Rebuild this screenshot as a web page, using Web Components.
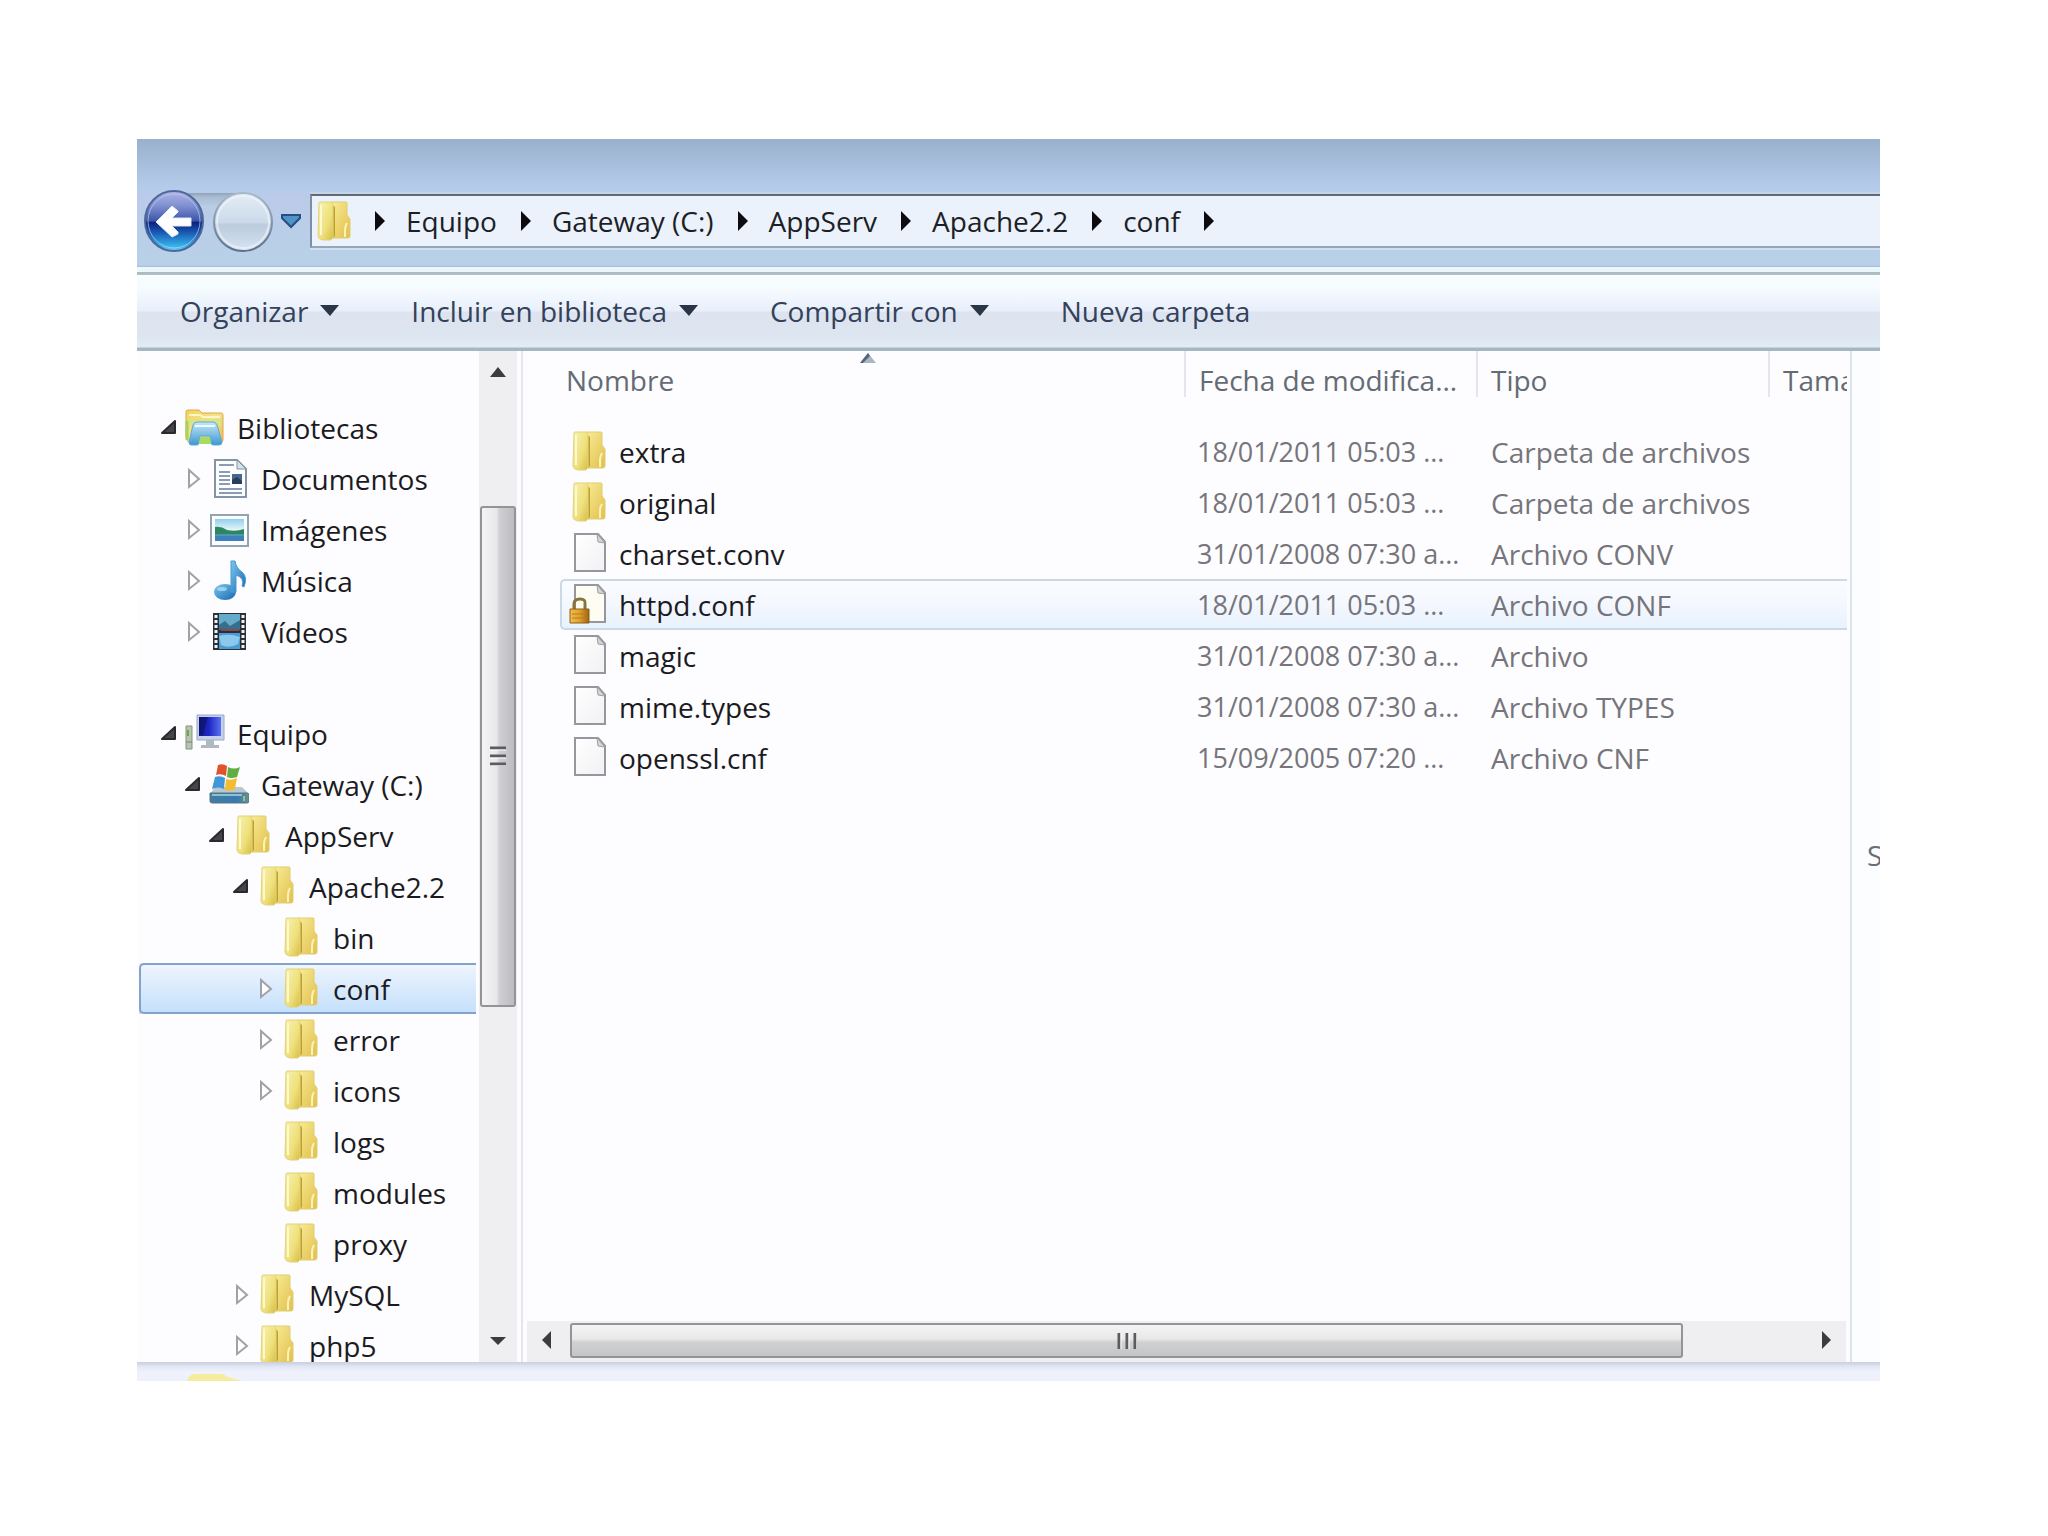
<!DOCTYPE html>
<html lang="es">
<head>
<meta charset="utf-8">
<title>conf</title>
<style>
  body { margin: 0; background: #fff; font-family: "Open Sans", "Noto Sans", sans-serif; font-size: 28px; color: #1b1b1f; }
  explorer-window { box-sizing: border-box; height: 100vh; padding: 139px 168px 155px 137px; }
</style>
</head>
<body>
<explorer-window>
  <nav-bar slot="nav">
    <path-crumb>Equipo</path-crumb>
    <path-crumb>Gateway (C:)</path-crumb>
    <path-crumb>AppServ</path-crumb>
    <path-crumb>Apache2.2</path-crumb>
    <path-crumb>conf</path-crumb>
  </nav-bar>
  <command-bar slot="commands">
    <command-button menu>Organizar</command-button>
    <command-button menu>Incluir en biblioteca</command-button>
    <command-button menu>Compartir con</command-button>
    <command-button>Nueva carpeta</command-button>
  </command-bar>
  <folder-tree slot="tree">
    <tree-item level="0" icon="library" state="open">Bibliotecas</tree-item>
    <tree-item level="1" icon="document" state="closed">Documentos</tree-item>
    <tree-item level="1" icon="picture" state="closed">Imágenes</tree-item>
    <tree-item level="1" icon="music" state="closed">Música</tree-item>
    <tree-item level="1" icon="video" state="closed" last>Vídeos</tree-item>
    <tree-item level="0" icon="computer" state="open">Equipo</tree-item>
    <tree-item level="1" icon="drive" state="open">Gateway (C:)</tree-item>
    <tree-item level="2" icon="folder" state="open">AppServ</tree-item>
    <tree-item level="3" icon="folder" state="open">Apache2.2</tree-item>
    <tree-item level="4" icon="folder">bin</tree-item>
    <tree-item level="4" icon="folder" state="closed" selected>conf</tree-item>
    <tree-item level="4" icon="folder" state="closed">error</tree-item>
    <tree-item level="4" icon="folder" state="closed">icons</tree-item>
    <tree-item level="4" icon="folder">logs</tree-item>
    <tree-item level="4" icon="folder">modules</tree-item>
    <tree-item level="4" icon="folder">proxy</tree-item>
    <tree-item level="3" icon="folder" state="closed">MySQL</tree-item>
    <tree-item level="3" icon="folder" state="closed">php5</tree-item>
  </folder-tree>
  <file-list slot="files"></file-list>
  <preview-pane slot="preview">S</preview-pane>
  <details-strip slot="details"></details-strip>
</explorer-window>

<script>
const ICONS = {
  folder: `<defs>
      <linearGradient id="a" x1="0" x2="1" y1="0" y2="1"><stop offset="0" stop-color="#f8f2ae"/><stop offset=".6" stop-color="#efe07c"/><stop offset="1" stop-color="#d6bd45"/></linearGradient>
      <linearGradient id="b" x1="0" x2="1" y1="0" y2="1"><stop offset="0" stop-color="#f8ec98"/><stop offset="1" stop-color="#e2bf4a"/></linearGradient>
      <linearGradient id="c" x1="0" x2="1"><stop offset="0" stop-color="#d3bb43"/><stop offset="1" stop-color="#b99c2e"/></linearGradient></defs>
    <path d="M17 1H32Q33 1 33 2V14L36 18V35Q36 37 34 37H19Z" fill="url(#b)" stroke="#e0cd70" stroke-width="1"/>
    <path d="M33 22Q31 25 31 29V36" fill="none" stroke="#fbf3bd" stroke-width="2"/>
    <path d="M17 3 21 6V35L17 39Z" fill="url(#c)"/>
    <path d="M5 2Q5 1 6 1H17Q19 2 19 5V36L17 39H9Q4 38 4 35Z" fill="url(#a)" stroke="#e2d277" stroke-width="1"/>
    <path d="M7 4V34" stroke="#fdf9cf" stroke-width="2"/>`,
  library: `<defs>
      <linearGradient id="a" x1="0" x2="1" y1="0" y2="1"><stop offset="0" stop-color="#f2d35f"/><stop offset=".5" stop-color="#f4e28a"/><stop offset="1" stop-color="#f0b850"/></linearGradient>
      <linearGradient id="b" x1="0" x2="0" y1="0" y2="1"><stop offset="0" stop-color="#c7e9f5"/><stop offset="1" stop-color="#3d97d3"/></linearGradient></defs>
    <path d="M1 5Q1 3 3 3H14L17 6H36Q38 6 38 8V33Q38 35 36 35H4Q2 35 1 30Z" fill="url(#a)" stroke="#dfa847"/>
    <path d="M4 8H15L18 10H35" stroke="#fff6c4" stroke-width="2" fill="none"/>
    <path d="M2 12H37V19H2Z" fill="#d4e58a" opacity=".8"/><path d="M2 14V33" stroke="#a5d35f" stroke-width="3"/>
    <path d="M8 18Q9 15 12 15H28Q31 15 32 18L37 35Q37 38 34 38H28Q26 38 26 35L25 29H15L14 35Q14 38 12 38H6Q4 38 4 35Z" fill="url(#b)" stroke="#5aa9d8"/>
    <path d="M10 19H30" stroke="#eefaff" stroke-width="2"/><path d="M15 30H25L26 37H14Z" fill="#a6dc63"/>`,
  document: `<path d="M6 2H28L37 11V39H6Z" fill="#fbfdff" stroke="#8494a4" stroke-width="2"/>
    <path d="M28 2V11H37Z" fill="#d3e2ec" stroke="#8494a4"/>
    <path d="M10 7H25M10 14H21M10 18H21M10 22H21M10 26H21M10 31H33M10 35H33" stroke="#8b9cb3" stroke-width="2"/>
    <path d="M23 16H33V26H23Z" fill="#48678e"/><path d="M23 22 28 19 33 23V26H23Z" fill="#273e5c"/>`,
  picture: `<defs><linearGradient id="a" x1="0" x2="0" y1="0" y2="1"><stop offset="0" stop-color="#8fd0ee"/><stop offset=".5" stop-color="#e7f6f8"/><stop offset="1" stop-color="#5fa8cf"/></linearGradient></defs>
    <path d="M2 6H39V37H2Z" fill="#fbfdfe" stroke="#93a3b0" stroke-width="2"/>
    <path d="M6 10H35V32H6Z" fill="url(#a)"/><path d="M6 18Q12 17 18 21 27 23 35 20V26H6Z" fill="#2d8661"/>
    <path d="M6 26Q20 24 35 26V32H6Z" fill="#3f7fbd"/><path d="M6 26H35" stroke="#60b3a0"/>`,
  music: `<defs><linearGradient id="a" x1="0" x2="1" y1="0" y2="1"><stop offset="0" stop-color="#7cc7ef"/><stop offset="1" stop-color="#1668b0"/></linearGradient></defs>
    <ellipse cx="16" cy="32" rx="11" ry="8" fill="url(#a)"/>
    <path d="M22 1H26Q27 8 33 12 39 17 35 27L33 26Q36 18 27 15V32H22Z" fill="url(#a)" stroke="#4b9bd2"/>
    <ellipse cx="13" cy="29" rx="5" ry="2" fill="#a9ddf5" opacity=".8"/>`,
  video: `<path d="M4 2H37V39H4Z" fill="#2a3038"/><path d="M10 3H31V19H10Z" fill="#66abc9"/><path d="M10 22H31V38H10Z" fill="#4b9cd0"/>
    <path d="M10 14 16 10 21 15 31 9V19H10Z" fill="#356f8e"/><path d="M10 25Q20 22 31 26L29 33Q20 38 12 34Z" fill="#8bc8ec"/>
    <path d="M12 19H30" stroke="#8e4448" stroke-width="2"/>
    <path d="M7 4V38M34 4V38" stroke="#f1f4f6" stroke-width="3" stroke-dasharray="3 2"/>`,
  computer: `<defs><linearGradient id="a" x1="0" x2="1"><stop offset="0" stop-color="#141a8c"/><stop offset=".45" stop-color="#1d28c4"/><stop offset="1" stop-color="#5a70ee"/></linearGradient></defs>
    <path d="M12 2H39V27H12Z" fill="#c5d0ea" stroke="#9aa9ca"/><path d="M14 4H36V23H14Z" fill="url(#a)"/>
    <path d="M15 4H23L18 22H14V4Z" fill="#0c1063" opacity=".6"/>
    <path d="M21 27H29V32H34V35H16V32H21Z" fill="#aebac0"/>
    <path d="M1 13H7V36H1Z" fill="#b8c3b4" stroke="#86937f"/><path d="M3 17V23" stroke="#6aa84a" stroke-width="2"/><path d="M1 29H7" stroke="#798577"/>`,
  drive: `<defs><linearGradient id="a" x1="0" x2="1"><stop offset="0" stop-color="#3f7f9f"/><stop offset=".7" stop-color="#3a78b0"/><stop offset="1" stop-color="#6e8f8e"/></linearGradient></defs>
    <path d="M6 23H33L40 30H1Z" fill="#b9c7ce"/><path d="M1 29H38Q40 29 40 31V37Q40 39 38 39H3Q1 39 1 37Z" fill="url(#a)" stroke="#577483"/>
    <path d="M3 31H33" stroke="#8cc0d8" stroke-width="2"/><path d="M35 32V37" stroke="#7fd07a" stroke-width="2"/>
    <path d="M9 1Q14 -1 18 2L17 12Q12 9 7 11Z" fill="#e0532c"/><path d="M19 3Q25 6 31 3L28 13Q22 15 18 13Z" fill="#5fae42"/>
    <path d="M6 13Q11 11 16 14L15 25Q9 22 3 25Z" fill="#3f96d8"/><path d="M17 15Q22 17 28 14L26 25Q20 28 16 26Z" fill="#f3bd31"/>`,
  file: `<defs><linearGradient id="a" x1="0" x2="1" y1="0" y2="1"><stop offset="0" stop-color="#fff"/><stop offset="1" stop-color="#f1f1f4"/></linearGradient></defs>
    <path d="M6 1H29L36 9V38H6Z" fill="url(#a)" stroke="#96969c" stroke-width="2"/><path d="M28 1 29 9 36 10Z" fill="#d5d5da" stroke="#9f9fa5"/>`,
  locked: `<defs><linearGradient id="a" x1="0" x2="1"><stop offset="0" stop-color="#f0c04c"/><stop offset=".5" stop-color="#e2a12c"/><stop offset="1" stop-color="#9c6412"/></linearGradient></defs>
    <path d="M6 1H29L36 9V38H6Z" fill="#fdfdf4" stroke="#96969c" stroke-width="2"/><path d="M28 1 29 9 36 10Z" fill="#d5d5da" stroke="#9f9fa5"/>
    <path d="M5 26V20Q5 15 11 15T16 20V26" fill="none" stroke="#8a7434" stroke-width="3"/>
    <path d="M1 25H20V39H1Z" fill="url(#a)" stroke="#8e5f18"/><path d="M3 30H18M3 34H18" stroke="#b57a1d"/>`
};

function define(name, html, setup) {
  customElements.define(name, class extends HTMLElement {
    constructor() {
      super();
      this.attachShadow({ mode: 'open' }).innerHTML = html;
    }
    connectedCallback() { if (setup) setup(this, this.shadowRoot); }
  });
}

define('shell-icon', `<style>:host{display:block;width:40px;height:41px;flex:none}svg{display:block}</style>
  <svg width="40" height="41" viewBox="0 0 40 41" aria-hidden="true"></svg>`,
  (el, root) => { root.querySelector('svg').innerHTML = ICONS[el.getAttribute('name')] || ''; });

define('explorer-window', `<style>
    :host{display:flex;flex-direction:column}
    .body{flex:1;min-height:0;display:flex;background:#fdfcfe}
    ::slotted([slot=files]){flex:1;min-width:0}
  </style>
  <slot name="nav"></slot><slot name="commands"></slot>
  <div class="body"><slot name="tree"></slot><slot name="files"></slot><slot name="preview"></slot></div>
  <slot name="details"></slot>`);

define('nav-bar', `<style>
    :host{display:flex;align-items:flex-start;box-sizing:border-box;height:128px;padding:51px 0 0 7px;overflow:hidden;
      background:linear-gradient(#9ab1cc,#a6bedb 24px,#b5cbea 48px,#bbcbe9 60px,#b9cfe8 100px,#b9d0e9 126px,#a9bad2)}
    .row{flex:1;min-width:0;display:flex;align-items:center;height:62px}
    button{border:0;padding:0;background:none;display:block;flex:none}
    svg{display:block}
    .pair{display:flex;gap:9px;align-items:center;background:linear-gradient(#8fa3ba,#a9bcd2 4px,#b9cde6 14px,transparent 30px) no-repeat 30px 3px/68px 34px}
    .recent{margin:0 8px 0 7px}
    .address{flex:1;min-width:0;box-sizing:border-box;height:54px;display:flex;align-items:center;padding-left:2px;
      background:#ecf2fb;border:2px solid #7d8ea3;border-top-color:#5d6b7c;border-bottom-color:#93a6bd;border-right:0;
      box-shadow:0 -2px #c9d4e2,0 2px #cfe0f1;overflow:hidden}
    .arrow{padding-left:21px}
  </style>
  <div class="row">
    <div class="pair">
    <button aria-label="Atrás"><svg width="60" height="62" viewBox="0 0 60 62">
      <defs><linearGradient id="g" x1="0" x2="0" y1="0" y2="1"><stop offset="0" stop-color="#b3b7e6"/><stop offset=".25" stop-color="#7f8fd0"/><stop offset=".5" stop-color="#3d55a8"/><stop offset=".52" stop-color="#0d1f7a"/><stop offset=".7" stop-color="#1a5db5"/><stop offset=".92" stop-color="#35b4ea"/><stop offset="1" stop-color="#6cd7f5"/></linearGradient></defs>
      <ellipse cx="30" cy="31" rx="29" ry="30" fill="url(#g)" stroke="#4d679b" stroke-width="2"/>
      <ellipse cx="30" cy="31" rx="26" ry="27" fill="none" stroke="#b7cdf0" stroke-width="1" opacity=".7"/>
      <path d="M12 32 28 16 34 21V22L28 28H47V36H28L34 42V44L28 47Z" fill="#fff" stroke="#dfe8f8" stroke-width="1"/></svg></button>
    <button aria-label="Adelante"><svg width="60" height="62" viewBox="0 0 60 62">
      <defs><linearGradient id="h" x1="0" x2="0" y1="0" y2="1"><stop offset="0" stop-color="#e4edf6"/><stop offset=".5" stop-color="#ccdae9"/><stop offset=".55" stop-color="#bccbdd"/><stop offset="1" stop-color="#d5e3f2"/></linearGradient>
      <linearGradient id="i" x1="0" x2="0" y1="0" y2="1"><stop offset="0" stop-color="#a9b9cc"/><stop offset="1" stop-color="#5f7086"/></linearGradient></defs>
      <ellipse cx="30" cy="32" rx="29" ry="29" fill="url(#h)" stroke="url(#i)" stroke-width="2"/>
      <ellipse cx="30" cy="32" rx="26" ry="26" fill="none" stroke="#eef4fb" stroke-width="2" opacity=".7"/></svg></button>
    </div>
    <button class="recent" aria-label="Páginas recientes"><svg width="22" height="18" viewBox="0 0 22 18"><path d="M2 3H20V6L11 15 2 6Z" fill="#4f93c9" stroke="#274f83" stroke-width="2"/></svg></button>
    <nav class="address"><shell-icon name="folder"></shell-icon>
      <svg class="arrow" width="10" height="20" viewBox="0 0 10 20"><path d="M0 0 10 10 0 20Z" fill="#0b0b10"/></svg><slot></slot></nav>
  </div>`);

define('path-crumb', `<style>
    :host{display:flex;align-items:center;flex:none}
    a{color:#1d1f27;text-decoration:none;padding:0 24px 0 21px;white-space:nowrap}
    svg{display:block}
  </style><a href="#"><slot></slot></a><svg width="10" height="20" viewBox="0 0 10 20"><path d="M0 0 10 10 0 20Z" fill="#0b0b10"/></svg>`);

define('command-bar', `<style>
    :host{display:flex;align-items:center;gap:72px;box-sizing:border-box;height:84px;padding:3px 0 0 43px;color:#33425a;overflow:hidden;
      background:linear-gradient(#eaf8fb 5px,#a9b9bf 5px,#b3c2c9 8px,#f8feff 8px,#f4fafe 24px,#e8effb 44px,#dde4f0 45px,#dde5f1 70px,#e0edf5 80px,#a7b7c1 81px)}
  </style><slot></slot>`);

define('command-button', `<style>
    :host{display:block;flex:none}
    button{display:flex;align-items:center;gap:12px;border:0;padding:0;background:none;font:inherit;color:inherit;white-space:nowrap}
    svg{display:none}
    :host([menu]) svg{display:block}
  </style><button><slot></slot><svg width="19" height="11" viewBox="0 0 19 11"><path d="M0 0H19L10 11Z" fill="#2a3648"/></svg></button>`);

define('folder-tree', `<style>
    :host{display:flex;flex:none;width:386px;box-sizing:border-box;border-right:2px solid #e4e6ee}
    .items{flex:1;min-width:0;overflow:hidden;padding-top:51px;box-sizing:border-box}
    scroll-bar{width:38px;margin:0 4px 0 3px}
  </style><div class="items" role="tree"><slot></slot></div>
  <scroll-bar direction="vertical" style="--before:154fr;--thumb:499fr;--after:354fr"></scroll-bar>`);

define('tree-item', `<style>
    :host{display:flex;align-items:center;box-sizing:border-box;height:51px;padding-left:calc(23px + 24px*var(--level,0));white-space:nowrap}
    :host([last]){margin-bottom:51px}
    :host([selected]){background:linear-gradient(#f0f6fe,#d9eafc 50%,#c3e0fd) no-repeat 2px 0/100% 100%;position:relative}
    :host([selected])::before{content:"";position:absolute;inset:0 0 0 2px;border:2px solid #84a3cc;border-right:0;border-radius:5px 0 0 5px}
    button{border:0;padding:0;background:none;width:18px;margin-right:7px;height:24px;flex:none}
    svg{display:none}
    :host([state=open]) .open,:host([state=closed]) .closed{display:block}
    .label{margin-left:12px}
  </style>
  <button aria-label="Expandir o contraer"><svg class="open" width="18" height="24" viewBox="0 0 18 24"><path d="M2 17H15V5Z" fill="#45454c" stroke="#2a2a2e" stroke-width="2" stroke-linejoin="round"/></svg>
  <svg class="closed" width="18" height="24" viewBox="0 0 18 24"><path d="M5 3V20L15 12Z" fill="#fff" stroke="#a1a1a8" stroke-width="2"/></svg></button>
  <shell-icon></shell-icon><span class="label"><slot></slot></span>`,
  (el, root) => {
    el.setAttribute('role', 'treeitem');
    el.style.setProperty('--level', el.getAttribute('level'));
    const icon = document.createElement('shell-icon');
    icon.setAttribute('name', el.getAttribute('icon'));
    root.querySelector('shell-icon').replaceWith(icon);
    if (!el.hasAttribute('state')) root.querySelector('button').style.visibility = 'hidden';
  });

define('scroll-bar', `<style>
    :host{display:grid;box-sizing:border-box;background:#efeef0}
    :host([direction=vertical]){grid-template-rows:var(--before) var(--thumb) var(--after)}
    :host([direction=horizontal]){grid-template-columns:var(--before) var(--thumb) var(--after)}
    .end{display:flex}
    .last{justify-content:flex-end;align-items:flex-end}
    button{border:0;padding:0;background:none;display:grid;place-items:center;width:38px;height:42px}
    :host([direction=horizontal]) button{height:38px}
    :host([direction=horizontal]) .last{align-items:flex-start}
    .thumb{box-sizing:border-box;display:grid;place-items:center;border:2px solid #949498;border-radius:3px;margin:0 1px}
    :host([direction=vertical]) .thumb{background:linear-gradient(90deg,#f4f4f6,#e8e8ea 45%,#cfcfd2 55%,#bdbdc1)}
    :host([direction=horizontal]) .thumb{background:linear-gradient(#f5f4f5,#e9e8e9 45%,#d0d1d2 55%,#c3c5c6);margin:2px 0 4px}
    svg{display:block}
    :host([direction=vertical]) .h,:host([direction=horizontal]) .v{display:none}
  </style>
  <div class="end"><button aria-label="Retroceder"><svg class="v" width="16" height="10" viewBox="0 0 16 10"><path d="M0 10 8 0 16 10Z" fill="#3c3c40"/></svg><svg class="h" width="9" height="18" viewBox="0 0 9 18"><path d="M9 0V18L0 9Z" fill="#3c3c40"/></svg></button></div>
  <div class="thumb"><svg class="v" width="16" height="20" viewBox="0 0 16 20"><path d="M0 2H16M0 10H16M0 18H16" stroke="#5c5c60" stroke-width="3"/><path d="M0 4H16M0 12H16M0 20H16" stroke="#fff"/></svg>
  <svg class="h" width="20" height="16" viewBox="0 0 20 16"><path d="M2 0V16M10 0V16M18 0V16" stroke="#5c5c60" stroke-width="3"/><path d="M4 0V16M12 0V16M20 0V16" stroke="#fff"/></svg></div>
  <div class="end last"><button aria-label="Avanzar"><svg class="v" width="16" height="8" viewBox="0 0 16 8"><path d="M0 0H16L8 8Z" fill="#3c3c40"/></svg><svg class="h" width="9" height="18" viewBox="0 0 9 18"><path d="M0 0 9 9 0 18Z" fill="#3c3c40"/></svg></button></div>`);

const FILES = [
  ['folder', 'extra', '18/01/2011 05:03 ...', 'Carpeta de archivos'],
  ['folder', 'original', '18/01/2011 05:03 ...', 'Carpeta de archivos'],
  ['file', 'charset.conv', '31/01/2008 07:30 a...', 'Archivo CONV'],
  ['locked', 'httpd.conf', '18/01/2011 05:03 ...', 'Archivo CONF'],
  ['file', 'magic', '31/01/2008 07:30 a...', 'Archivo'],
  ['file', 'mime.types', '31/01/2008 07:30 a...', 'Archivo TYPES'],
  ['file', 'openssl.cnf', '15/09/2005 07:20 ...', 'Archivo CNF']
];

define('file-list', `<style>
    :host{display:flex;flex-direction:column;overflow:hidden}
    .table{flex:1;min-height:0;overflow:hidden;padding-left:37px;margin-right:3px}
    table{width:100%;table-layout:fixed;border-spacing:0}
    .date,.type{width:292px}.size{width:79px}
    th,td{box-sizing:border-box;padding:0 0 0 15px;text-align:left;white-space:nowrap;font-weight:400;overflow:hidden}
    th{height:60px;padding-bottom:2px;color:#646b75;position:relative;
      background:linear-gradient(#e3e6ee,#e3e6ee) no-repeat 0 0/2px 46px}
    th:first-child{padding-left:6px;background:none}
    th svg{position:absolute;top:2px;left:48%}
    td{height:51px;color:#75757b}
    td:nth-child(2){font-size:27px;padding-left:13px}
    td:first-child{padding-left:9px;color:#1b1b1f}
    tbody::before{content:"";display:block;height:15px}
    .name{display:flex;align-items:center;gap:10px}
    .hot td{background:linear-gradient(#fafcff,#f4f7fe 50%,#e8f2fd);border:solid #cbd9e6;border-width:2px 0}
    .hot td:first-child{border-left-width:2px;border-radius:5px 0 0 5px;padding-left:7px}
    scroll-bar{height:41px;margin:0 4px 0 4px}
  </style>
  <div class="table"><table>
    <thead><tr><th>Nombre<svg width="16" height="10" viewBox="0 0 16 10"><path d="M0 10 8 0 16 10Z" fill="#a9b6c4"/><path d="M0 10 8 0 10 3 3 10Z" fill="#56667a"/></svg></th>
    <th class="date">Fecha de modifica...</th><th class="type">Tipo</th><th class="size">Tamaño</th></tr></thead>
    <tbody></tbody></table></div>
  <scroll-bar direction="horizontal" style="--before:43fr;--thumb:1114fr;--after:163fr"></scroll-bar>`,
  (el, root) => {
    root.querySelector('tbody').innerHTML = FILES.map(([icon, name, date, type]) =>
      `<tr${icon === 'locked' ? ' class="hot"' : ''}><td><div class="name"><shell-icon name="${icon}"></shell-icon>${name}</div></td><td>${date}</td><td>${type}</td><td></td></tr>`).join('');
  });

define('preview-pane', `<style>
    :host{display:flex;align-items:center;flex:none;width:30px;box-sizing:border-box;padding:0 0 3px 15px;border-left:2px solid #dfe3ec;background:#fbfdff;color:#6d6d74;overflow:hidden}
  </style><slot></slot>`);

define('details-strip', `<style>
    :host{display:block;flex:none;height:19px;padding-left:50px;background:linear-gradient(#c9cfdd,#e3e8f5 5px,#eff2fc 10px,#eef1fb)}
    svg{display:block}
  </style><svg width="56" height="19" viewBox="0 0 56 19"><path d="M0 19Q2 12 8 12H34Q38 12 40 15L56 19Z" fill="#f5ec9d"/></svg>`);
</script>
</body>
</html>
